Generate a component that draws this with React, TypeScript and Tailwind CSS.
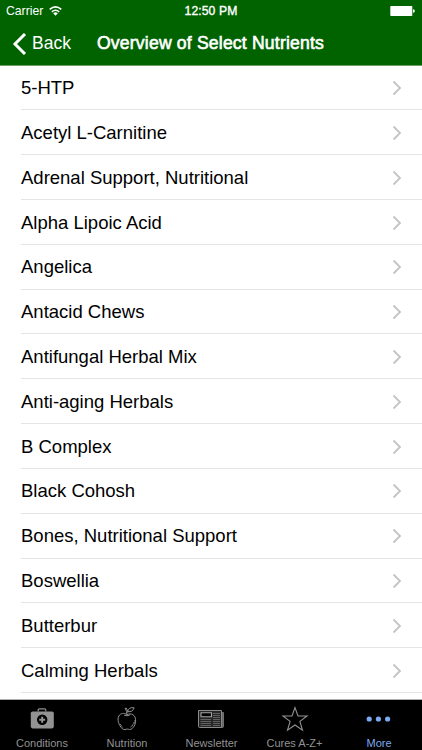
import React from "react";

const nutrients = [
  "5-HTP",
  "Acetyl L-Carnitine",
  "Adrenal Support, Nutritional",
  "Alpha Lipoic Acid",
  "Angelica",
  "Antacid Chews",
  "Antifungal Herbal Mix",
  "Anti-aging Herbals",
  "B Complex",
  "Black Cohosh",
  "Bones, Nutritional Support",
  "Boswellia",
  "Butterbur",
  "Calming Herbals",
];

function WifiIcon() {
  return (
    <svg width="13" height="10" viewBox="0 0 13 10" fill="none" stroke="white" strokeWidth="1.6">
      <path d="M0.7 3.4Q6.5 -1.5 12.3 3.4" />
      <path d="M2.8 5.8Q6.5 2.7 10.2 5.8" />
      <path d="M4.2 7.3Q6.5 5.3 8.8 7.3L6.5 9.8Z" fill="white" stroke="none" />
    </svg>
  );
}

function BatteryIcon() {
  return (
    <svg width="26" height="10" viewBox="0 0 26 10" fill="white">
      <rect x="0.3" y="0" width="22" height="10" rx="0.8" />
      <path d="M23 3.2Q24.9 3.4 24.9 5T23 6.8Z" />
    </svg>
  );
}

function ConditionsIcon() {
  return (
    <svg width="24" height="26" viewBox="0 0 24 26">
      <path d="M8.2 5.6V4Q8.2 2.9 9.3 2.9H14.7Q15.8 2.9 15.8 4V5.6" fill="none" stroke="#929292" strokeWidth="1.2" />
      <rect x="0.8" y="5.4" width="23" height="17" rx="1.8" fill="#929292" />
      <circle cx="12.2" cy="13.8" r="5.2" fill="black" />
      <path d="M12.2 10.8V16.8M9.2 13.8H15.2" stroke="#929292" strokeWidth="2" />
    </svg>
  );
}

function NutritionIcon() {
  return (
    <svg width="24" height="26" viewBox="0 0 24 26" fill="none" stroke="#929292" strokeWidth="1" strokeLinejoin="round">
      <path d="M11.8 8.6C9 6.7 5.6 7.1 3.8 10C1.8 13.5 4 19.6 7.4 22.8C9.2 24.4 10.7 23 12.3 23.1C14 23.2 15.2 24.2 17.1 22.6C19.5 20.4 21 17.3 20.6 13.8C20.2 8.9 16.7 6.8 11.8 8.6Z" />
      <path d="M11.8 8.6C11.9 6.4 11.4 4.3 10.1 2.4L11.2 2C12.2 3.6 12.6 5 12.6 6.5M12.6 5.6C13.1 2.6 15.5 1.1 19.1 1.8C18.4 4.6 16 6.2 12.6 5.6ZM9.1 9.2Q12 10.5 14.8 9" />
      <path d="M18.9 16.4L16.9 20.8M20 14.2L18.9 18M17.6 19L15.2 21.7M5.2 18L7.9 21.8" strokeDasharray="1 .6" />
    </svg>
  );
}

function NewsletterIcon() {
  return (
    <svg width="28" height="26" viewBox="0 0 28 26" fill="none" stroke="#8a8a8a" strokeWidth="1">
      <path d="M23 6.5H25.5V20.5Q25.5 21.5 24.5 21.5H23Z" fill="#666" stroke="#707070" />
      <path d="M0.5 4.5H23.5V21.5H1.5Q0.5 21.5 0.5 20.5Z" fill="#262626" />
      <path d="M3 6.8H13.5V10.8H3Z" fill="black" stroke="#a5a5a5" strokeWidth="1.1" />
      <path d="M15 7.5H22M15 9.5H22M15 11.5H22M2.5 13.5H13M2.5 15.5H13M2.5 17.5H13M2.5 19.5H13M15 13.5H22M15 15.5H22M15 17.5H22M15 19.5H22" strokeWidth=".6" />
    </svg>
  );
}

function StarIcon() {
  return (
    <svg width="28" height="26" viewBox="0 0 28 26" fill="none" stroke="#929292" strokeWidth="1.1">
      <path d="M14 1.6L17 10H26L18.9 15.4L21.5 24.2L14 19L6.5 24.2L9.1 15.4L2 10H11Z" />
    </svg>
  );
}

function MoreIcon() {
  return (
    <svg width="26" height="26" viewBox="0 0 26 26" fill="#7aaaf0">
      <circle cx="3.2" cy="13" r="2.6" />
      <circle cx="12.4" cy="13" r="2.6" />
      <circle cx="21.6" cy="13" r="2.6" />
    </svg>
  );
}

const tabs = [
  { label: "Conditions", icon: <ConditionsIcon />, style: "w-[84px] text-[#929292]" },
  { label: "Nutrition", icon: <NutritionIcon />, style: "w-[86px] text-[#929292]" },
  { label: "Newsletter", icon: <NewsletterIcon />, style: "w-[83px] text-[#929292]" },
  { label: "Cures A-Z+", icon: <StarIcon />, style: "w-[83px] text-[#929292]" },
  { label: "More", icon: <MoreIcon />, style: "w-[86px] text-[#7aaaf0]" },
];

export default function App() {
  return (
    <div className="flex h-[750px] w-[422px] flex-col overflow-hidden bg-white font-['Liberation_Sans',Arial,sans-serif]">
      <header className="h-[66px] shrink-0 border-b border-[#69a169] bg-[#006300] text-white">
        <div className="grid h-[22px] grid-cols-3 items-center pr-[6px] pl-[6px] text-[12.2px] leading-[22px]">
          <div className="flex items-center gap-[6px]">
            <span>Carrier</span>
            <WifiIcon />
          </div>
          <span className="text-center text-[12.2px] tracking-[0.1px] whitespace-nowrap [-webkit-text-stroke:0.35px_white]">12:50 PM</span>
          <div className="flex justify-end"><BatteryIcon /></div>
        </div>
        <div className="flex h-[43px] items-center pl-[12px]">
          <svg width="15" height="22" viewBox="0 0 15 22" fill="none" stroke="white" strokeWidth="3">
            <path d="M13 1L3 11L13 21" />
          </svg>
          <span className="ml-[5px] w-[65px] text-[17.5px]">Back</span>
          <h1 className="text-[17.6px] tracking-[0.18px] whitespace-nowrap [-webkit-text-stroke:0.6px_white]">Overview of Select Nutrients</h1>
        </div>
      </header>
      <main className="min-h-0 flex-1 overflow-hidden">
        <ul className="-mt-[0.6px]">
          {nutrients.map((name) => (
            <li key={name} className="ml-[21px] flex h-[44.83px] items-center justify-between border-b border-[#e5e5e5] pt-[1.4px] pr-[20px]">
              <span className="text-[18.5px] leading-[22px] text-black">{name}</span>
              <svg width="10" height="16" viewBox="0 0 10 16" fill="none" stroke="#c4c4c8" strokeWidth="1.8">
                <path d="M1.5 1.5L8 8L1.5 14.5" />
              </svg>
            </li>
          ))}
        </ul>
      </main>
      <nav className="flex h-[51px] shrink-0 border-t border-[#b0b0b0] bg-black">
        {tabs.map((tab) => (
          <div key={tab.label} className={"flex shrink-0 flex-col items-center pt-[6px] " + tab.style}>
            {tab.icon}
            <span className="mt-[4px] text-[11px] leading-[14px] whitespace-nowrap">{tab.label}</span>
          </div>
        ))}
      </nav>
    </div>
  );
}
